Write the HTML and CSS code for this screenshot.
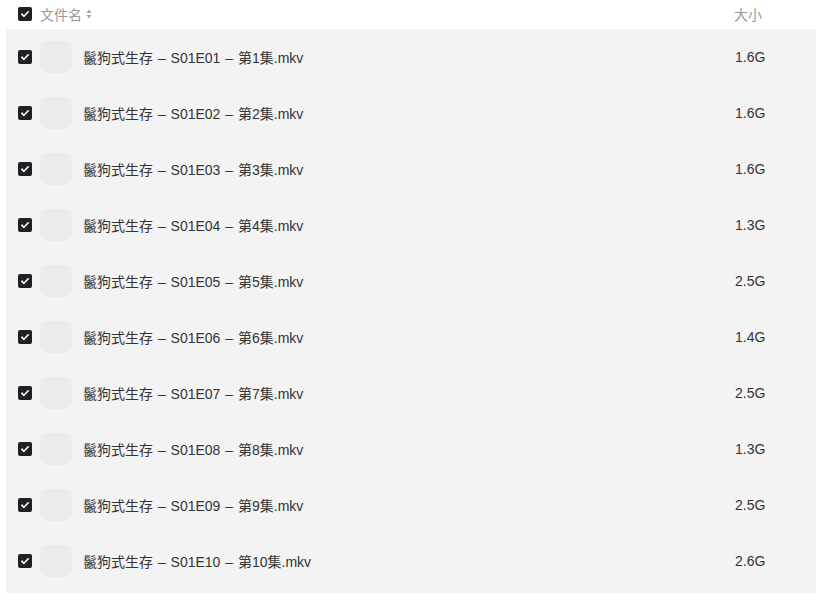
FILE: index.html
```html
<!DOCTYPE html>
<html lang="zh">
<head>
<meta charset="utf-8">
<link rel="stylesheet" href="styles.css">
</head>
<body>
<div class="list">
  <div class="head">
    <span class="cb"><svg viewBox="0 0 14 14"><path d="M3.8 7.2 L6 9.3 L10.2 4.8" fill="none" stroke="#fff" stroke-width="1.6" stroke-linecap="round" stroke-linejoin="round"/></svg></span>
    <span class="hname">文件名</span>
    <svg class="sort" viewBox="0 0 6 10"><path d="M3 0.5 L5.6 4 H0.4Z" fill="#aaa"/><path d="M3 9.5 L5.6 6 H0.4Z" fill="#aaa"/></svg>
    <span class="hsize">大小</span>
  </div>
  <div class="rows">
    <div class="row"><span class="cb"><svg viewBox="0 0 14 14"><path d="M3.8 7.2 L6 9.3 L10.2 4.8" fill="none" stroke="#fff" stroke-width="1.6" stroke-linecap="round" stroke-linejoin="round"/></svg></span><span class="thumb"></span><span class="name">鬣狗式生存 – S01E01 – 第1集.mkv</span><span class="size">1.6G</span></div>
    <div class="row"><span class="cb"><svg viewBox="0 0 14 14"><path d="M3.8 7.2 L6 9.3 L10.2 4.8" fill="none" stroke="#fff" stroke-width="1.6" stroke-linecap="round" stroke-linejoin="round"/></svg></span><span class="thumb"></span><span class="name">鬣狗式生存 – S01E02 – 第2集.mkv</span><span class="size">1.6G</span></div>
    <div class="row"><span class="cb"><svg viewBox="0 0 14 14"><path d="M3.8 7.2 L6 9.3 L10.2 4.8" fill="none" stroke="#fff" stroke-width="1.6" stroke-linecap="round" stroke-linejoin="round"/></svg></span><span class="thumb"></span><span class="name">鬣狗式生存 – S01E03 – 第3集.mkv</span><span class="size">1.6G</span></div>
    <div class="row"><span class="cb"><svg viewBox="0 0 14 14"><path d="M3.8 7.2 L6 9.3 L10.2 4.8" fill="none" stroke="#fff" stroke-width="1.6" stroke-linecap="round" stroke-linejoin="round"/></svg></span><span class="thumb"></span><span class="name">鬣狗式生存 – S01E04 – 第4集.mkv</span><span class="size">1.3G</span></div>
    <div class="row"><span class="cb"><svg viewBox="0 0 14 14"><path d="M3.8 7.2 L6 9.3 L10.2 4.8" fill="none" stroke="#fff" stroke-width="1.6" stroke-linecap="round" stroke-linejoin="round"/></svg></span><span class="thumb"></span><span class="name">鬣狗式生存 – S01E05 – 第5集.mkv</span><span class="size">2.5G</span></div>
    <div class="row"><span class="cb"><svg viewBox="0 0 14 14"><path d="M3.8 7.2 L6 9.3 L10.2 4.8" fill="none" stroke="#fff" stroke-width="1.6" stroke-linecap="round" stroke-linejoin="round"/></svg></span><span class="thumb"></span><span class="name">鬣狗式生存 – S01E06 – 第6集.mkv</span><span class="size">1.4G</span></div>
    <div class="row"><span class="cb"><svg viewBox="0 0 14 14"><path d="M3.8 7.2 L6 9.3 L10.2 4.8" fill="none" stroke="#fff" stroke-width="1.6" stroke-linecap="round" stroke-linejoin="round"/></svg></span><span class="thumb"></span><span class="name">鬣狗式生存 – S01E07 – 第7集.mkv</span><span class="size">2.5G</span></div>
    <div class="row"><span class="cb"><svg viewBox="0 0 14 14"><path d="M3.8 7.2 L6 9.3 L10.2 4.8" fill="none" stroke="#fff" stroke-width="1.6" stroke-linecap="round" stroke-linejoin="round"/></svg></span><span class="thumb"></span><span class="name">鬣狗式生存 – S01E08 – 第8集.mkv</span><span class="size">1.3G</span></div>
    <div class="row"><span class="cb"><svg viewBox="0 0 14 14"><path d="M3.8 7.2 L6 9.3 L10.2 4.8" fill="none" stroke="#fff" stroke-width="1.6" stroke-linecap="round" stroke-linejoin="round"/></svg></span><span class="thumb"></span><span class="name">鬣狗式生存 – S01E09 – 第9集.mkv</span><span class="size">2.5G</span></div>
    <div class="row"><span class="cb"><svg viewBox="0 0 14 14"><path d="M3.8 7.2 L6 9.3 L10.2 4.8" fill="none" stroke="#fff" stroke-width="1.6" stroke-linecap="round" stroke-linejoin="round"/></svg></span><span class="thumb"></span><span class="name">鬣狗式生存 – S01E10 – 第10集.mkv</span><span class="size">2.6G</span></div>
  </div>
</div>
</body>
</html>
```
FILE: styles.css
```css
* { box-sizing: border-box; }
html, body { margin: 0; padding: 0; background: #fff; }
body {
  font-family: "Liberation Sans", "Noto Sans CJK SC", sans-serif;
  font-size: 14px;
  color: #333;
  overflow: hidden;
}
.list { width: 816px; padding-left: 6px; }
.head {
  height: 29px;
  display: flex;
  align-items: center;
  padding-left: 12px;
  padding-bottom: 1px;
}
.cb {
  width: 14px;
  height: 14px;
  border-radius: 2px;
  background: #1f1f24;
  display: inline-flex;
  flex: none;
}
.cb svg { width: 14px; height: 14px; display: block; }
.hname { margin-left: 8px; color: #999; }
.sort { width: 6px; height: 10px; margin-left: 4px; }
.hsize { margin-left: auto; width: 82px; color: #999; }
.rows { background: #f3f3f3; padding-bottom: 4px; }
.row {
  height: 56px;
  display: flex;
  align-items: center;
  padding-left: 12px;
}
.thumb {
  width: 32px;
  height: 32px;
  border-radius: 7px;
  background: #ebebeb;
  margin-left: 8px;
  flex: none;
}
.name { margin-left: 11px; color: #333; word-spacing: 1px; }
.size { margin-left: auto; width: 81px; color: #333; }
```
